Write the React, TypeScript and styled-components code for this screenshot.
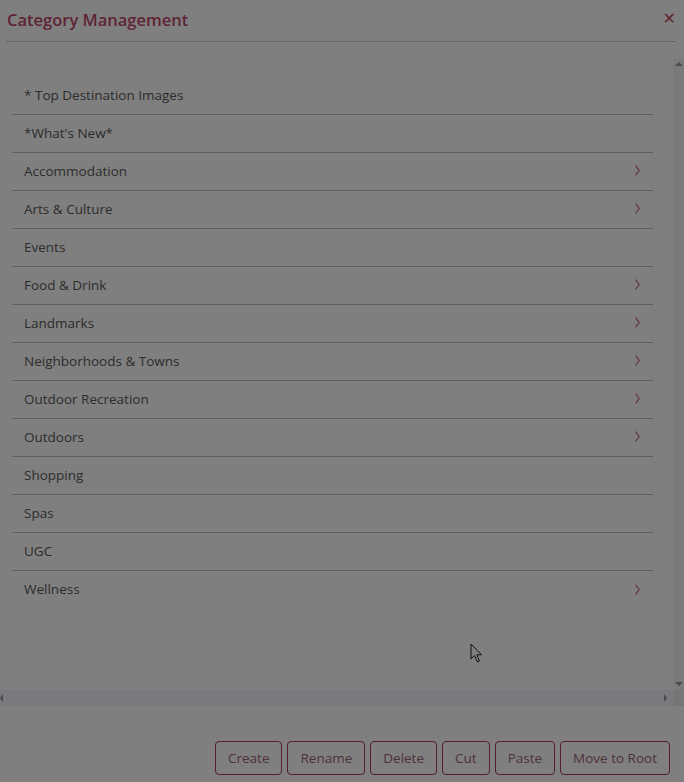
import styled, { createGlobalStyle } from "styled-components";

const GlobalStyle = createGlobalStyle`
  html, body {
    margin: 0;
    padding: 0;
    background: #7f7f7f;
  }
  body {
    font-family: "Open Sans", "Liberation Sans", sans-serif;
  }
`;

const Dialog = styled.div`
  position: relative;
  width: 684px;
  height: 782px;
  background: #7f7f7f;
  display: flex;
  flex-direction: column;
  overflow: hidden;
`;

const TitleBar = styled.div`
  display: flex;
  align-items: center;
  justify-content: space-between;
  height: 42px;
  margin: 0 9px 0 7px;
  border-bottom: 1px dotted #4f4f4f;
  box-sizing: border-box;
`;

const Title = styled.h1`
  margin: 0;
  font-size: 16.5px;
  font-weight: 600;
  color: #5f2434;
  line-height: 1;
`;

const CloseButton = styled.button`
  background: none;
  border: none;
  padding: 0;
  margin-right: -1px;
  margin-bottom: 4px;
  color: #5f2434;
  font-size: 16px;
  font-weight: 700;
  line-height: 1;
  cursor: pointer;
  font-family: "DejaVu Sans", sans-serif;
`;

const ScrollArea = styled.div`
  display: grid;
  grid-template-columns: 1fr 11px;
  grid-template-rows: 1fr 16px;
  margin-top: 16px;
  height: 648px;
`;

const Content = styled.div`
  padding: 19px 20px 0 12px;
`;

const List = styled.ul`
  list-style: none;
  margin: 0;
  padding: 0;
`;

const Row = styled.li`
  display: flex;
  align-items: center;
  justify-content: space-between;
  height: 38px;
  padding: 0 12px 2px;
  box-sizing: border-box;
  font-size: 13.5px;
  font-weight: 400;
  color: #2c2c2c;
  border-bottom: 1px solid #606060;

  &:last-child {
    border-bottom: none;
  }
`;

const Chevron = styled.svg`
  margin-right: 1px;
`;

const VScroll = styled.div`
  background: #7a7a7a;
  display: flex;
  flex-direction: column;
  justify-content: space-between;
  align-items: center;
  padding: 4px 0;
  box-sizing: border-box;
`;

const HScroll = styled.div`
  background: #797a7d;
  display: flex;
  justify-content: space-between;
  align-items: center;
  padding: 0 6px 0 0;
`;

const Corner = styled.div`
  background: #767676;
`;

const Arrow = styled.span<{ $dir: "up" | "down" | "left" | "right" }>`
  width: 0;
  height: 0;
  border: 4px solid transparent;
  ${({ $dir }) =>
    $dir === "up"
      ? "border-bottom-color: #4a4a4a; border-top-width: 0;"
      : $dir === "down"
      ? "border-top-color: #4a4a4a; border-bottom-width: 0;"
      : $dir === "left"
      ? "border-right-color: #4a4a4a; border-width: 4px 3px 4px 0;"
      : "border-left-color: #4a4a4a; border-width: 4px 0 4px 3px;"}
`;

const Footer = styled.div`
  display: flex;
  justify-content: flex-end;
  gap: 5px;
  padding: 35px 14px 0 0;
`;

const ActionButton = styled.button`
  height: 34px;
  padding: 0 12px;
  background: transparent;
  border: 1px solid #561d2a;
  border-radius: 4px;
  font-family: "Open Sans", "Liberation Sans", sans-serif;
  font-size: 13.5px;
  font-weight: 400;
  color: #4e3238;
  cursor: pointer;
`;

const Cursor = styled.svg`
  position: absolute;
  left: 470px;
  top: 643px;
`;

const categories: { name: string; children?: boolean }[] = [
  { name: "* Top Destination Images" },
  { name: "*What's New*" },
  { name: "Accommodation", children: true },
  { name: "Arts & Culture", children: true },
  { name: "Events" },
  { name: "Food & Drink", children: true },
  { name: "Landmarks", children: true },
  { name: "Neighborhoods & Towns", children: true },
  { name: "Outdoor Recreation", children: true },
  { name: "Outdoors", children: true },
  { name: "Shopping" },
  { name: "Spas" },
  { name: "UGC" },
  { name: "Wellness", children: true },
];

const actions = ["Create", "Rename", "Delete", "Cut", "Paste", "Move to Root"];

export default function App() {
  return (
    <>
      <GlobalStyle />
      <Dialog>
        <TitleBar>
          <Title>Category Management</Title>
          <CloseButton aria-label="Close">✕</CloseButton>
        </TitleBar>
        <ScrollArea>
          <Content>
            <List>
              {categories.map((c) => (
                <Row key={c.name}>
                  <span>{c.name}</span>
                  {c.children && (
                    <Chevron width="5" height="11" viewBox="0 0 5 11">
                      <path d="M0.6 0.6 L4.2 5.5 L0.6 10.4" fill="none" stroke="#62303e" strokeWidth="1.1" />
                    </Chevron>
                  )}
                </Row>
              ))}
            </List>
          </Content>
          <VScroll>
            <Arrow $dir="up" />
            <Arrow $dir="down" />
          </VScroll>
          <HScroll>
            <Arrow $dir="left" />
            <Arrow $dir="right" />
          </HScroll>
          <Corner />
        </ScrollArea>
        <Footer>
          {actions.map((a) => (
            <ActionButton key={a}>{a}</ActionButton>
          ))}
        </Footer>
        <Cursor width="14" height="22" viewBox="0 0 14 22">
          <path
            d="M1 1 L1 16 L4.5 12.5 L7.5 19 L9.5 18 L6.8 11.8 L11.5 11.8 Z"
            fill="#7f7f7f"
            stroke="#111"
            strokeWidth="1"
          />
        </Cursor>
      </Dialog>
    </>
  );
}
